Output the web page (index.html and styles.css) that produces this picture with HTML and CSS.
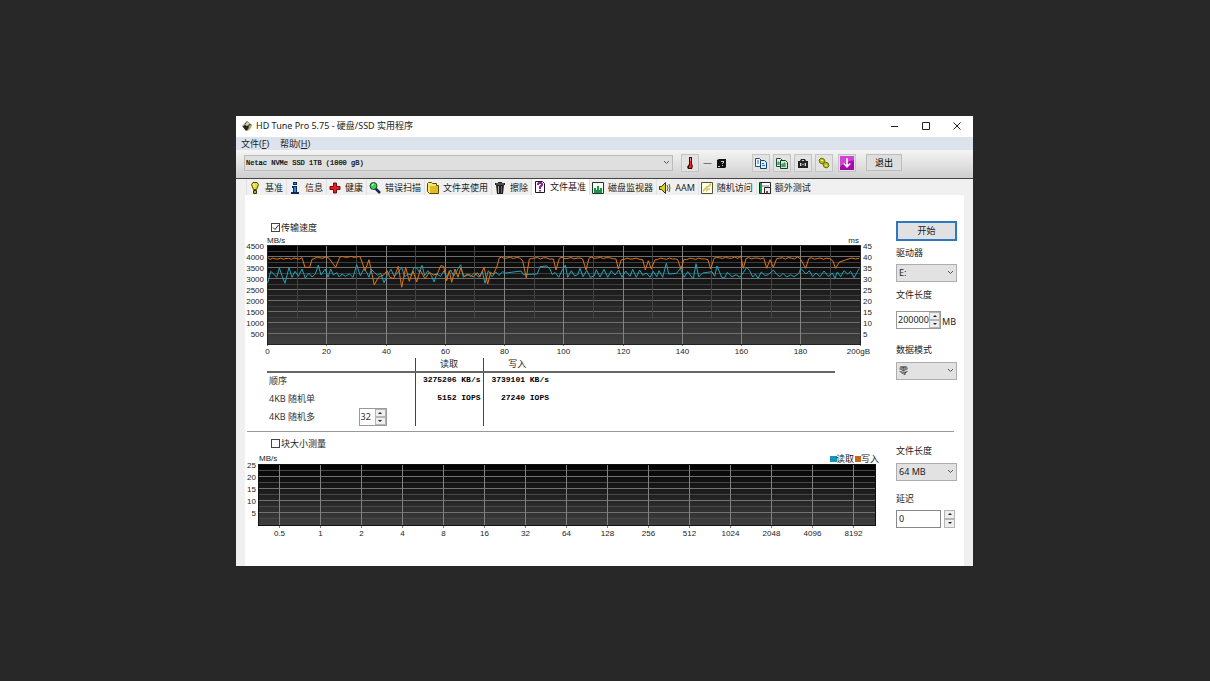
FILE: index.html
```
<!DOCTYPE html>
<html lang="zh-CN">
<head>
<meta charset="utf-8">
<title>HD Tune Pro 5.75</title>
<link rel="stylesheet" href="styles.css">
</head>
<body>
<main class="window">
  <header class="titlebar">
    <svg class="icon" viewBox="0 0 12 12"><path d="M1 6 6 1l5 4-5 6z" fill="#57594b"/><path d="M2 7 5 4l3 3-3 4z" fill="#24251f"/><path d="M6 2l3 1-3 3-2-1z" fill="#d6d3ae"/><path d="M8 6l3-2-1 4-3 3z" fill="#b5a94a"/><path d="M1 5l2-2 1 1-2 2z" fill="#e8e8dc"/></svg>
    <h1 class="title">HD Tune Pro 5.75 - 硬盘/SSD 实用程序</h1>
    <div class="caption-buttons">
      <button class="caption" aria-label="最小化"><svg viewBox="0 0 10 10"><path d="M1 5.500h7"/></svg></button>
      <button class="caption" aria-label="最大化"><svg viewBox="0 0 10 10"><path d="M1.500 1.500h7v7h-7z"/></svg></button>
      <button class="caption" aria-label="关闭"><svg viewBox="0 0 10 10"><path d="M1.500 1.500l7 7M8.500 1.500l-7 7"/></svg></button>
    </div>
  </header>
  <nav class="menubar">
    <button class="menu">文件(<u>F</u>)</button>
    <button class="menu">帮助(<u>H</u>)</button>
  </nav>
  <div class="toolbar">
    <select class="drive" aria-label="硬盘"><option>Netac NVMe SSD 1TB (1000 gB)</option></select>
    <button class="tool" aria-label="温度"><svg class="icon" viewBox="0 0 12 12"><path d="M5 0h3v7l1 2-1 3H4L3 10l2-3z" fill="#3a0c0c"/><path d="M6 3h1v5l1 1-1 2H5V9l1-1z" fill="#f02828"/><path d="M6 1h1v3H6z" fill="#e58b8b"/></svg></button>
    <span class="temp">—</span>
    <svg class="icon disk" viewBox="0 0 12 12"><path d="M1 3l2-1h7v8l-1 1H1z" fill="#111"/><path d="M5 4h3v2H7v1H6V6h1V5H5zM6 8h1v1H6zM2 9h2v1H2z" fill="#ccc"/></svg>
    <div class="tool-group">
      <button class="tool" aria-label="复制"><svg class="icon" viewBox="0 0 12 12"><path d="M.5 1.500h4l2 2v6h-6z" fill="#eef6ff" stroke="#234f7c"/><path d="M5.500 3.500h4l2 2v6h-6z" fill="#dceeff" stroke="#173e68"/><path d="M2 4h2M2 6h2M7 6.500h2M7 8.500h3" stroke="#2b75c0"/></svg></button>
      <button class="tool" aria-label="复制图片"><svg class="icon" viewBox="0 0 12 12"><path d="M.5 1.500h4l2 2v6h-6z" fill="#e3f3e4" stroke="#1d4a30"/><path d="M4.500 3.500h5l2 2v6h-7z" fill="#d2ead4" stroke="#173a26"/><path d="M6 10V7h1v3M8 10V6h1v4M2 8V5h1v3" stroke="#218445" fill="none"/></svg></button>
      <button class="tool" aria-label="截图"><svg class="icon" viewBox="0 0 12 12"><path d="M1 4h2l1-2h4l1 2h2v7H1z" fill="#222"/><path d="M5 3h2v1H5zM3 6h6v3H3z" fill="#ddd"/><circle cx="6" cy="7.500" r="2" fill="#333"/><path d="M5.500 7h1v1h-1z" fill="#fff"/></svg></button>
      <button class="tool" aria-label="选项"><svg class="icon" viewBox="0 0 12 12"><g fill="#b5bd18" stroke="#6c7208"><path d="M1 3l2-2 3 1 1 2-2 3-3-1z"/><path d="M5 7l2-2 3 1 1 3-2 2-3-1z"/></g><path d="M3 3h2v1H3zM7 8h2v1H7z" fill="#eef08a"/></svg></button>
    </div>
    <button class="tool" aria-label="保存"><svg class="icon large" viewBox="0 0 13 13"><path d="M0 0h13v13H0z" fill="#a80aad"/><path d="M0 0h13v4Q6 5 0 10z" fill="#cf45d3"/><path d="M6.500 2v8M3.500 7l3 3 3-3" fill="none" stroke="#fff" stroke-width="1.500"/></svg></button>
    <button class="exit">退出</button>
  </div>
  <nav class="tabs">
    <button class="tab"><svg class="icon" viewBox="0 0 12 12"><path d="M4 .5h4l1.500 2-2 5h-3l-2-5z" fill="#e7df22" stroke="#4c490c"/><path d="M4.500 8.500h3v3h-3z" fill="#b9b018" stroke="#35330a"/><path d="M5 2v3" stroke="#fffcb0"/></svg>基准</button>
    <button class="tab"><svg class="icon" viewBox="0 0 12 12"><path d="M4 0h4v3H4zM3 4h5v6h2v2H2v-2h2V6H3z" fill="#102a55"/><path d="M5 1h2v1H5zM5 5h2v5H5z" fill="#2a8be0"/></svg>信息</button>
    <button class="tab"><svg class="icon" viewBox="0 0 12 12"><path d="M4.500 1h3v3.500H11v3H7.500V11h-3V7.500H1v-3h3.500z" fill="#df2328" stroke="#76090d"/></svg>健康</button>
    <button class="tab"><svg class="icon" viewBox="0 0 12 12"><path d="M6 6l5 5" stroke="#18265c" stroke-width="2.500"/><circle cx="4.500" cy="4" r="3.500" fill="#43cb55" stroke="#164c28"/><path d="M3 4q0-2 2-2" stroke="#c5ffd0" fill="none"/></svg>错误扫描</button>
    <button class="tab"><svg class="icon" viewBox="0 0 12 12"><path d="M.5 1.500l1-1h3l1 1h4v2h2v8h-9l-2-2z" fill="#f6e56b" stroke="#5a4908"/><path d="M3 4h8v7H3z" fill="#dfbd25"/></svg>文件夹使用</button>
    <button class="tab"><svg class="icon" viewBox="0 0 12 12"><path d="M4 0h4v1h3v2H1V1h3zM2 3h8l-1 9H3z" fill="#202020"/><path d="M4 4h1v7H4z" fill="#aaa"/><path d="M7 4h1v7H7z" fill="#666"/><path d="M2 2h8" stroke="#777"/></svg>擦除</button>
    <button class="tab active"><svg class="icon" viewBox="0 0 12 12"><path d="M1.500.5h7l2 2v9h-9z" fill="#fff" stroke="#211325"/><path d="M4 4V3l1-1h2l1 1v1L6 6v2M6 9v1.500" fill="none" stroke="#8b2294" stroke-width="2"/></svg>文件基准</button>
    <button class="tab"><svg class="icon" viewBox="0 0 12 12"><path d="M.5.5h11v11H.5z" fill="#fbfff8" stroke="#193a22"/><path d="M2 11V6h2v2h1V4h2v4h1V6h2v5z" fill="#159948"/></svg>磁盘监视器</button>
    <button class="tab"><svg class="icon" viewBox="0 0 12 12"><path d="M.5 4.500h2L6.500.5v11l-4-4h-2z" fill="#d6cc29" stroke="#383609"/><path d="M8 3q2 3 0 6M10 2q2 4 0 8" fill="none" stroke="#626018"/></svg>AAM</button>
    <button class="tab"><svg class="icon" viewBox="0 0 12 12"><path d="M.5.5h11v11H.5z" fill="#fffce8" stroke="#57532d"/><path d="M2 9h1V7h2V5h2V4h2V2h1M5 9h1V7h3" fill="none" stroke="#c3af2a"/></svg>随机访问</button>
    <button class="tab"><svg class="icon" viewBox="0 0 12 12"><path d="M.5.5h11v11H.5z" fill="#fff" stroke="#222"/><path d="M1 1h2v10H1z" fill="#1b9b46"/><path d="M5.500 5.500h6v6h-6z" fill="#eee" stroke="#222"/><path d="M7 9h2v2H7z" fill="#ba3333"/><path d="M3 4h7" stroke="#777"/></svg>额外测试</button>
  </nav>
  <div class="panel">
    <section class="bench">
      <div class="bench-main">
        <label class="check"><input type="checkbox" checked>传输速度</label>
        <svg class="chart" id="transfer" viewBox="0 0 651 123"></svg>
        <table class="results">
          <colgroup><col class="name"><col class="value"><col class="value"><col></colgroup>
          <thead><tr><th></th><th>读取</th><th>写入</th><th></th></tr></thead>
          <tbody>
            <tr><td>顺序</td><td>3275206 KB/s</td><td>3739101 KB/s</td><td></td></tr>
            <tr><td>4KB 随机单</td><td>5152 IOPS</td><td>27240 IOPS</td><td></td></tr>
            <tr><td><div class="queue"><label for="queue">4KB 随机多</label><span class="spin narrow"><input id="queue" value="32"><span class="arrows"><button aria-label="增加"></button><button aria-label="减少"></button></span></span></div></td><td></td><td></td><td></td></tr>
          </tbody>
        </table>
      </div>
      <aside class="side">
        <button class="start">开始</button>
        <label class="gap-s" for="drive">驱动器</label>
        <select id="drive"><option>E:</option></select>
        <label class="gap-s" for="length">文件长度</label>
        <div class="length"><span class="spin"><input id="length" value="200000"><span class="arrows"><button aria-label="增加"></button><button aria-label="减少"></button></span></span><span class="unit">MB</span></div>
        <label class="gap-l" for="pattern">数据模式</label>
        <select id="pattern"><option>零</option></select>
      </aside>
    </section>
    <section class="bench blocks">
      <div class="bench-main">
        <label class="check"><input type="checkbox">块大小测量</label>
        <svg class="chart" id="block" viewBox="0 0 651 88"></svg>
      </div>
      <aside class="side">
        <label for="size">文件长度</label>
        <select id="size"><option>64 MB</option></select>
        <label class="gap-m" for="delay">延迟</label>
        <div class="delay"><input id="delay" value="0"><span class="arrows"><button aria-label="增加"></button><button aria-label="减少"></button></span></div>
      </aside>
    </section>
  </div>
</main>
<script src="charts.js"></script>
</body>
</html>
```
FILE: styles.css
```
* { box-sizing: border-box; }
body {
  margin: 0;
  min-height: 100vh;
  display: flex;
  align-items: center;
  padding: 0 237px 0 236px;
  background: #282828;
  color: #222;
  font: 9px/12px "Noto Sans", "Noto Sans CJK SC", sans-serif;
}
button, input, select { margin: 0; font: inherit; color: inherit; border-radius: 0; }
button { padding: 0; border: 0; background: none; }
.window { flex: 1; min-width: 0; background: #f0f0f0; }
.icon { width: 12px; height: 12px; flex: none; display: block; }
.icon.large { width: 14px; height: 14px; }

.titlebar { display: flex; align-items: center; height: 21px; padding: 0 11px 0 5px; background: #fff; }
.title { flex: 1; margin: 0 0 0 3px; font-size: 9px; font-weight: 400; }
.caption-buttons { display: flex; gap: 21px; }
.caption { width: 10px; height: 10px; }
.caption svg { display: block; width: 10px; height: 10px; fill: none; stroke: #222; }
.menubar { display: flex; gap: 11px; height: 13px; padding-left: 5px; background: #dde3ed; }
.menu { line-height: 13px; }

.toolbar {
  display: flex;
  align-items: center;
  height: 29px;
  padding: 0 71px 2px 8px;
  background: linear-gradient(#f5f5f5, #cfcfcf);
  border-bottom: 1px solid #444;
}
select {
  appearance: none;
  display: block;
  width: 100%;
  height: 18px;
  padding: 0 12px 0 2px;
  border: 1px solid #adadad;
  background: #e2e2e2 url("data:image/svg+xml,%3Csvg xmlns='http://www.w3.org/2000/svg' width='7' height='5' fill='none' stroke='%23555'%3E%3Cpath d='M1 1l2.500 2.500L6 1'/%3E%3C/svg%3E") no-repeat right 2px center;
}
.toolbar .drive {
  flex: 1;
  width: auto;
  min-width: 0;
  height: 16px;
  margin-right: 8px;
  padding-left: 1px;
  background-color: #dfdfdf;
  border-color: #bbb;
  font: 7px/12px "Liberation Mono", monospace;
  color: #000;
  -webkit-text-stroke: 0.2px #000;
}
.tool { display: flex; align-items: center; justify-content: center; width: 18px; height: 18px; border: 1px solid #c4c4c4; background: #e3e3e3; }
.temp { margin-left: 4px; }
.disk { margin: 0 24px 0 4px; }
.tool-group { display: flex; gap: 3px; margin-right: 5px; }
.exit { width: 36px; height: 17px; margin-left: 10px; border: 1px solid #bdbdbd; background: #dedede; color: #000; }

.tabs { display: flex; height: 16px; padding: 0 9px 0 10px; }
.tab { display: flex; align-items: center; gap: 4px; padding: 2px 3px 0 2px; border-left: 1px solid #e2e2e2; color: #222; white-space: nowrap; }
.tab.active { padding-top: 0; background: #fff; }

.panel { margin: 0 9px; background: #fff; }
.bench { display: flex; align-items: flex-start; }
.bench-main { flex: 1; min-width: 0; padding-top: 27px; }
.check { display: flex; align-items: center; gap: 1px; height: 12px; padding-left: 26px; }
.check input { appearance: none; width: 9px; height: 9px; border: 1px solid #444; background: #fff; }
.check input:checked { background: url("data:image/svg+xml,%3Csvg xmlns='http://www.w3.org/2000/svg' viewBox='0 0 7 7' fill='none' stroke='%23222'%3E%3Cpath d='M1 3.500l2 2L6.500 1'/%3E%3C/svg%3E"); }
.chart { display: block; width: 100%; font: 8px "Liberation Sans", sans-serif; fill: #222; }
.check + #transfer { margin-top: 1px; }

.results { table-layout: fixed; border-collapse: collapse; width: 568px; max-width: 90%; margin: 0 0 5px 22px; }
.name { width: 148px; }
.value { width: 68px; }
.results th { height: 14px; padding: 0; font-weight: 400; border-bottom: 2px solid #666; }
.results td { height: 18px; padding: 0 2px 2px; text-align: right; font: bold 8px/12px "Liberation Mono", monospace; color: #000; white-space: nowrap; }
.results td:first-child { padding: 0 2px; text-align: left; font: 9px/12px "Noto Sans", "Noto Sans CJK SC", sans-serif; color: #333; }
.results td:nth-child(2), .results th:nth-child(2) { border-left: 1px solid #444; border-right: 1px solid #444; }
.queue { display: flex; align-items: center; justify-content: space-between; padding-right: 26px; }

.side { display: flex; flex-direction: column; width: 68px; padding: 26px 7px 0 0; flex: none; }
.side label { height: 12px; margin-bottom: 5px; }
.start { height: 20px; margin-bottom: 6px; border: 2px solid #2b78c5; background: #e1e1e1; }
.side .gap-s { margin-top: 0; }
.side select + .gap-s { margin-top: 7px; margin-bottom: 10px; }
.side .gap-l { margin-top: 15px; margin-bottom: 6px; }
.side .gap-m { margin-top: 12px; }
.length { display: flex; align-items: center; gap: 1px; }
.unit { padding-top: 5px; }
.spin { display: flex; width: 45px; height: 18px; border: 1px solid #999; background: #fff; }
.spin.narrow { width: 28px; }
.spin input { flex: 1; width: 0; min-width: 0; padding: 0 0 0 1px; border: 0; background: none; }
.arrows { display: flex; flex-direction: column; flex: none; width: 11px; }
.arrows button { flex: 1; display: flex; align-items: center; justify-content: center; border: 1px solid #b5b5b5; background: #eee; }
.arrows button::before { content: ""; border: 2px solid transparent; border-top: 0; border-bottom: 2px solid #222; }
.arrows button + button::before { border-bottom: 0; border-top: 2px solid #222; }
.delay { display: flex; gap: 3px; height: 18px; }
.delay input { width: 45px; padding: 0 2px; border: 1px solid #888; }

.blocks { position: relative; padding-bottom: 28px; }
.blocks::before { content: ""; position: absolute; top: 0; left: 2px; right: 10px; border-top: 1px solid #999; }
.blocks .bench-main { padding-top: 7px; }
.blocks .side { padding-top: 14px; }
.blocks .side label:first-child { margin-bottom: 6px; }
```
FILE: charts.js
```
const NS = "http://www.w3.org/2000/svg";

function add(parent, name, attrs, text) {
  const el = document.createElementNS(NS, name);
  for (const key in attrs) el.setAttribute(key, attrs[key]);
  if (text !== undefined) el.textContent = text;
  parent.appendChild(el);
  return el;
}

function frame(svg, id, x, y, w, h) {
  const grad = add(svg, "linearGradient", { id, x1: 0, y1: 0, x2: 0, y2: 1 });
  add(grad, "stop", { offset: 0, "stop-color": "#000" });
  add(grad, "stop", { offset: 1, "stop-color": "#404040" });
  add(svg, "rect", { x, y, width: w, height: h, fill: `url(#${id})` });
}

function line(svg, x1, y1, x2, y2, stroke) {
  add(svg, "line", { x1, y1, x2, y2, stroke, "stroke-width": 1 });
}

function series(svg, stroke, points) {
  const shown = points.map(([x, y]) => `${(x / 3 - 5).toFixed(1)},${(y / 3 - 21).toFixed(1)}`);
  add(svg, "polyline", { points: shown.join(" "), fill: "none", stroke, "stroke-width": 1, "stroke-linejoin": "round" });
}

/* Fills a long stretch between two x positions with small variations. */
function run(from, to, level, swing, step) {
  const out = [];
  let k = 0;
  for (let x = from; x <= to; x += step) {
    out.push([x, level + swing * Math.sin(k * 2.3 + from) * (k % 3 === 0 ? 1 : 0.6)]);
    k += 1;
  }
  return out;
}

const transfer = document.getElementById("transfer");
frame(transfer, "shade-transfer", 22, 10, 594, 100);
for (let i = 0; i < 9; i++) {
  const y = 10.5 + i * 11;
  line(transfer, 22, y, 616, y, i ? "#6e6e6e" : "#888");
  line(transfer, 22, y + 6, 616, y + 6, "#3d3d3d");
  add(transfer, "text", { x: 19, y: y + 3, "text-anchor": "end" }, 4500 - i * 500);
  add(transfer, "text", { x: 618, y: y + 3 }, 45 - i * 5);
}
for (let i = 0; i <= 20; i++) {
  const x = 22.5 + Math.round(i * 29.63);
  if (i % 2) line(transfer, x, 11, x, 84, "#444");
  else {
    line(transfer, x, 11, x, 111, "#828282");
    if (i < 20) add(transfer, "text", { x, y: 119, "text-anchor": "middle" }, i * 10);
  }
}
add(transfer, "text", { x: 625, y: 119, "text-anchor": "end" }, "200gB");
add(transfer, "rect", { x: 22.5, y: 10.5, width: 593, height: 99, fill: "none", stroke: "#222" });
add(transfer, "text", { x: 22, y: 8 }, "MB/s");
add(transfer, "text", { x: 614, y: 8, "text-anchor": "end" }, "ms");

series(transfer, "#22a3b8", [
  [83,207],[92,172],[101,180],[110,190],[118,162],[127,188],[135,208],[147,160],[156,190],[165,172],[175,187],[186,165],[196,192],[206,177],[216,189],[226,180],
  [235,153],[243,183],[256,165],[264,190],[272,165],[280,183],[290,176],[298,189],[306,180],[316,187],[328,180],[339,190],[350,152],[361,185],[372,164],[381,177],[387,190],[394,166],[404,176],[413,184],[422,178],[432,206],[442,184],
  [453,166],[462,186],[472,178],[485,160],[494,188],[504,180],[514,183],[522,160],[530,162],[538,174],[546,154],[554,185],[563,170],[574,184],[582,204],[590,180],[602,187],[612,170],[620,188],[632,168],[641,187],[652,168],[662,152],
  [670,190],[681,180],[692,188],[704,176],[716,190],[727,172],[735,208],[745,170],[756,188],[767,174],[777,184],[788,173],[797,177],[844,171],[850,182],[892,180],[900,158],[920,156],[930,165],[937,182],[945,175],[956,190],[968,166],[976,153],[983,190],[994,170],[1004,186],
  [1013,182],[1020,163],[1029,188],[1040,169],[1051,190],[1062,186],[1069,167],[1080,189],[1092,166],[1103,190],[1114,170],[1125,183],[1136,168],[1146,190],[1157,171],[1170,187],[1178,166],[1189,190],[1199,168],
  [1208,184],[1219,177],[1230,190],[1240,172],[1250,188],[1257,170],[1268,190],[1279,148],[1286,180],[1310,178],[1321,163],[1332,190],[1343,173],[1360,195],[1368,149],[1376,189],[1388,177],[1416,173],[1424,187],[1431,156],[1445,190],[1453,193],[1462,175],[1476,188],
  [1488,182],[1500,190],[1510,176],[1520,160],[1529,170],[1538,189],[1546,180],[1554,193],[1564,174],[1576,185],[1586,181],[1600,168],[1610,181],[1620,188],[1629,178],[1640,189],[1652,182],[1662,188],[1677,178],[1682,163],[1698,180],[1708,170],[1718,188],[1728,177],[1740,188],[1752,171],[1765,187],[1777,177],[1785,192],[1792,174],[1802,188],[1812,170],[1823,180],[1832,172],[1842,191],[1858,163]
]);
series(transfer, "#df7616", [
  [83,130], ...run(90,188,134,3,8), [195,160],[209,160],[216,136], ...run(222,275,131,4,9),
  [287,160],[299,130], ...run(306,366,129,2,9), [375,170],[387,137],[403,213],[415,190],[432,182],[441,170],[450,190],
  [461,194],[475,157],[485,220],[497,160],[508,202],[519,171],[530,204],[541,168],[555,195],[568,175],[580,183],[592,180],[602,155],[611,157],[620,200],[628,170],[635,205],[645,165],[654,190],[662,162],[673,188],[688,181],[700,189],[712,176],[720,188],[732,160],[743,210],[752,175],[760,181],
  [770,160],[778,132], ...run(784,838,132,3,9), [848,140],[859,192],[868,135], ...run(874,936,132,3,9),
  [940,135],[948,168],[958,133], ...run(966,1024,133,3,9), [1028,135],[1038,168],[1047,133], ...run(1054,1124,132,3,9), [1128,135],[1135,165],[1144,137],
  ...run(1152,1203,134,3,9), [1208,137],[1216,168],[1225,140],[1234,165],[1245,137], ...run(1252,1306,134,3,9), [1313,137],[1323,165],[1332,136],
  ...run(1340,1402,134,3,9), [1404,137],[1412,165],[1422,133], ...run(1430,1496,132,3,9), [1502,126],[1510,163],[1518,134], ...run(1526,1572,133,3,9),
  [1580,163],[1590,137],[1600,160],[1610,134], ...run(1618,1688,133,4,9), [1697,163],[1706,134], ...run(1714,1774,134,3,9),
  [1778,140],[1787,163],[1797,145],[1816,138],[1835,132],[1846,135],[1858,133]
]);

const block = document.getElementById("block");
frame(block, "shade-block", 13, 14, 618, 62);
for (let i = 0; i < 5; i++) {
  const y = 14.5 + i * 12;
  line(block, 13, y, 631, y, i ? "#737373" : "#555");
  line(block, 13, y + 6, 631, y + 6, "#484848");
  add(block, "text", { x: 11, y: y + 3, "text-anchor": "end" }, 25 - i * 5);
}
["0.5", "1", "2", "4", "8", "16", "32", "64", "128", "256", "512", "1024", "2048", "4096", "8192"].forEach((label, i) => {
  const x = 34.5 + i * 41;
  line(block, x, 15, x, 78, "#828282");
  add(block, "text", { x, y: 86, "text-anchor": "middle" }, label);
});
add(block, "rect", { x: 13.5, y: 14.5, width: 617, height: 61, fill: "none", stroke: "#111" });
add(block, "text", { x: 14, y: 11 }, "MB/s");
add(block, "rect", { x: 585, y: 6, width: 7, height: 6, fill: "#1792b8" });
add(block, "text", { x: 591, y: 12, "font-size": 9, "font-family": "Noto Sans CJK SC" }, "读取");
add(block, "rect", { x: 610, y: 6, width: 6, height: 6, fill: "#c7651b" });
add(block, "text", { x: 616, y: 12, "font-size": 9, "font-family": "Noto Sans CJK SC" }, "写入");
```
